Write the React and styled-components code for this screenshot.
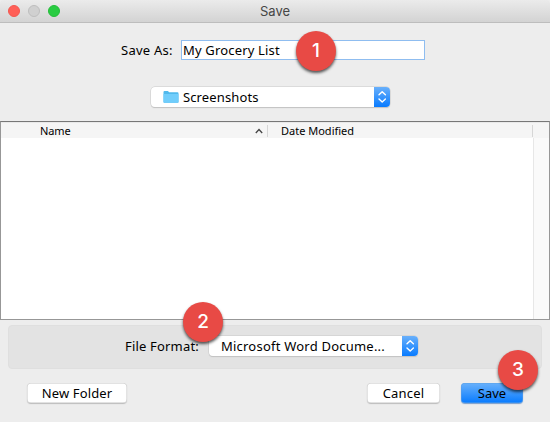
import React from 'react';
import styled, { createGlobalStyle } from 'styled-components';

const Global = createGlobalStyle`
  * { box-sizing: border-box; }
  body { margin: 0; background: #ededed; }
`;

const Dialog = styled.div`
  position: relative;
  width: 550px;
  height: 422px;
  display: flex;
  flex-direction: column;
  overflow: hidden;
  background: #ededed;
  color: #000;
  font: 13px/20px 'Noto Sans', 'Open Sans', sans-serif;
`;

const TitleBar = styled.header`
  height: 23px;
  flex: none;
  display: grid;
  grid-template-columns: 60px 1fr 60px;
  align-items: center;
  padding: 0 0 1px;
  border-bottom: 1px solid #bdbdbd;
  border-radius: 4px 4px 0 0;
  background: linear-gradient(#ebebeb, #d3d3d3);
`;

const Lights = styled.div`
  display: flex;
  gap: 8px;
  padding-left: 8px;
`;

const Light = styled.span`
  flex: none;
  width: 12px;
  height: 12px;
  border-radius: 50%;
  border: 1px solid ${(p) => p.$edge};
  background: ${(p) => p.$fill};
`;

const Title = styled.div`
  text-align: center;
  color: #464646;
  font: 13px/20px 'Inter', sans-serif;
`;

const Text = styled.span`
  display: block;
  white-space: nowrap;
  font-size: ${(p) => p.$size || 13}px;
  letter-spacing: ${(p) => p.$track || 0}px;
`;

const NameRow = styled.div`
  display: flex;
  align-items: center;
  height: 20px;
  margin: 17px 0 0 121px;
`;

const Label = styled.div`
  flex: none;
  width: ${(p) => p.$width}px;
`;

const Field = styled.div`
  width: 244px;
  height: 20px;
  padding-left: 1px;
  border: 1px solid #8fbdf0;
  background: #fff;
  line-height: 19px;
`;

const Popup = styled.div`
  display: flex;
  align-items: center;
  flex: none;
  width: ${(p) => p.$width}px;
  height: 20px;
  padding-left: 12px;
  border-radius: 4px;
  background: #fff;
  box-shadow: 0 0 0 0.5px #c9c9c9, 0 1px 1px #bcbcbc;
  overflow: hidden;
`;

const PopupArrows = styled.span`
  display: flex;
  width: 16px;
  height: 20px;
  margin-left: auto;
  background: linear-gradient(#69b0fb, #087bff);
`;

const LocationRow = styled.div`
  display: flex;
  margin: 27px 0 0 151px;
`;

const FolderIcon = styled.svg`
  flex: none;
  width: 16px;
  height: 14px;
  margin-right: 4px;
`;

const FileList = styled.section`
  flex: none;
  height: 199px;
  margin-top: 14px;
  border: 1px solid #979797;
  border-top-color: #777;
  background: #fff;
  display: flex;
  flex-direction: column;
`;

const ListHeader = styled.div`
  display: grid;
  grid-template-columns: 267px 265px 1fr;
  align-items: center;
  height: 16px;
  flex: none;
  border-top: 1px solid #e9e9e9;
  background: #f5f5f5;
  line-height: 16px;
`;

const Column = styled.div`
  display: flex;
  align-items: center;
  justify-content: space-between;
  height: 12px;
  padding: 0 4px 0 ${(p) => p.$indent}px;
  border-right: 1px solid #d6d6d6;
`;

const ListBody = styled.div`
  flex: 1;
  display: flex;
  justify-content: flex-end;
`;

const ScrollTrack = styled.div`
  width: 16px;
  border-left: 1px solid #e7e7e7;
  background: #fafafa;
`;

const FormatPanel = styled.div`
  display: flex;
  align-items: center;
  flex: none;
  height: 44px;
  margin: 5px 8px 0;
  padding: 0 0 2px 116px;
  border: 1px solid #dfdfdf;
  border-radius: 4px;
  background: #e3e3e3;
`;

const Actions = styled.footer`
  display: flex;
  margin: 14px 27px 0;
`;

const Button = styled.button`
  display: flex;
  justify-content: center;
  width: ${(p) => p.$width}px;
  height: 20px;
  margin: 0 0 0 ${(p) => p.$gap || 0};
  padding: 0;
  border: 0;
  border-radius: 4px;
  color: inherit;
  font: inherit;
  line-height: 20px;
  background: ${(p) => (p.$primary ? 'linear-gradient(#69b1fb, #087bff)' : '#fff')};
  box-shadow: inset 0 0 0 0.5px ${(p) => (p.$primary ? '#5a9fe6' : '#c6c6c6')},
    0 1px 1px ${(p) => (p.$primary ? '#789dcb' : '#bcbcbc')};
`;

const Badge = styled.div`
  position: absolute;
  left: ${(p) => p.$x}px;
  top: ${(p) => p.$y}px;
  width: 40px;
  height: 40px;
  border-radius: 50%;
  background: #e84a45;
  color: #fff;
  text-align: center;
  font: 500 19px/40px 'Inter', sans-serif;
  box-shadow: 0 2px 3px rgba(0, 0, 0, 0.65);
`;

function Arrows() {
  return (
    <PopupArrows>
      <svg width="16" height="20" fill="none" stroke="#fff" strokeWidth="1.4" strokeLinecap="round" strokeLinejoin="round">
        <path d="M5 7.800 8.200 4.700 11.400 7.800M5 12 8.200 15 11.400 12" />
      </svg>
    </PopupArrows>
  );
}

export default function App() {
  return (
    <>
      <Global />
      <Dialog>
        <TitleBar>
          <Lights>
            <Light $fill="#ff5f57" $edge="#f3574f" />
            <Light $fill="#d0d0d0" $edge="#bebebe" />
            <Light $fill="#29cc42" $edge="#24bd39" />
          </Lights>
          <Title>Save</Title>
        </TitleBar>
        <NameRow>
          <Label $width={60}><Text $track={0.25}>Save As:</Text></Label>
          <Field><Text $track={0.17}>My Grocery List</Text></Field>
        </NameRow>
        <LocationRow>
          <Popup $width={239}>
            <FolderIcon viewBox="0 0 16 14">
              <path d="M.5 2Q.5 1 1.5 1H5l1 1.3h8.5q1 0 1 1V12q0 .8-.8.8H1.3Q.5 12.8.5 12Z" fill="#50b9ec" />
              <path d="M.5 4h15v8q0 .8-.8.8H1.3Q.5 12.8.5 12Z" fill="#70cdfb" />
            </FolderIcon>
            <Text $track={0.12}>Screenshots</Text>
            <Arrows />
          </Popup>
        </LocationRow>
        <FileList>
          <ListHeader>
            <Column $indent={39}>
              <Text $size={11} $track={-0.1}>Name</Text>
              <svg width="8" height="6" fill="none" stroke="#444" strokeWidth="1.3">
                <path d="M.8 5 4 1.5 7.2 5" />
              </svg>
            </Column>
            <Column $indent={13}><Text $size={11}>Date Modified</Text></Column>
          </ListHeader>
          <ListBody><ScrollTrack /></ListBody>
        </FileList>
        <FormatPanel>
          <Label $width={84}><Text $track={0.18}>File Format:</Text></Label>
          <Popup $width={209}>
            <Text $track={0.22}>Microsoft Word Docume...</Text>
            <Arrows />
          </Popup>
        </FormatPanel>
        <Actions>
          <Button $width={100}><Text $track={0.15}>New Folder</Text></Button>
          <Button $width={73} $gap="auto"><Text $track={0.2}>Cancel</Text></Button>
          <Button $width={62} $gap="21px" $primary><Text>Save</Text></Button>
        </Actions>
        <Badge $x={296} $y={31}>1</Badge>
        <Badge $x={183} $y={302}>2</Badge>
        <Badge $x={498} $y={350}>3</Badge>
      </Dialog>
    </>
  );
}
